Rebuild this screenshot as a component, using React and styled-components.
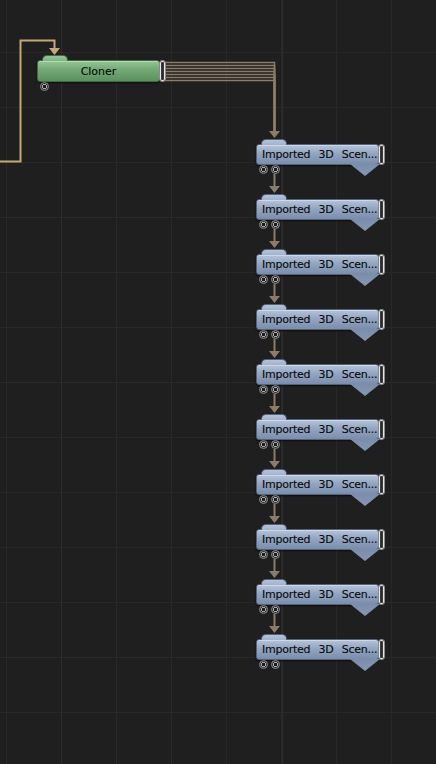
import React from 'react';
import styled, { createGlobalStyle, css } from 'styled-components';

const GlobalStyle = createGlobalStyle`
    html, body {
        margin: 0;
        padding: 0;
        background: #1f1f1f;
    }
    body {
        font-family: "DejaVu Sans", "Liberation Sans", sans-serif;
    }
`;

const Canvas = styled.div`
    position: relative;
    width: 436px;
    height: 764px;
    overflow: hidden;
    background-color: #1f1f1f;
    background-image:
        linear-gradient(to right, #2d2d2d 1px, transparent 1px),
        linear-gradient(to right, #282828 1px, transparent 1px),
        linear-gradient(to bottom, #282828 1px, transparent 1px);
    background-size: 221px 100%, 55px 100%, 100% 55px;
    background-position: 61px 0, 6px 0, 0 52px;
`;

const Wires = styled.svg`
    position: absolute;
    left: 0;
    top: 0;
    pointer-events: none;
`;

// a spot on the free canvas where a node (or group of nodes) sits
const CanvasItem = styled.div`
    position: absolute;
    left: ${p => p.$x}px;
    top: ${p => p.$y}px;
`;

const NodeColumn = styled.div`
    display: flex;
    flex-direction: column;
    gap: 34px;
`;

const palettes = {
    green: {
        top: '#96c596',
        mid: '#72a874',
        bottom: '#5b915e',
        border: '#3f6a43',
        tab: '#7fb480',
    },
    blue: {
        top: '#b6c4da',
        mid: '#93a5c1',
        bottom: '#7a8eac',
        border: '#52627b',
        tab: '#9fb1cc',
    },
};

const NodeBox = styled.div`
    position: relative;
    width: ${p => p.$width}px;
    height: ${p => p.$height}px;
    box-sizing: border-box;
    border: 1px solid ${p => palettes[p.$kind].border};
    border-radius: 3px;
    background: linear-gradient(
        to bottom,
        ${p => palettes[p.$kind].top} 0%,
        ${p => palettes[p.$kind].mid} 45%,
        ${p => palettes[p.$kind].bottom} 100%
    );
    box-shadow: inset 0 1px 0 rgba(255, 255, 255, 0.35), 0 1px 2px rgba(0, 0, 0, 0.6);
    display: flex;
    align-items: center;
    font-size: 11px;
    color: #0a0a0a;
    white-space: nowrap;

    &::before {
        content: '';
        position: absolute;
        top: -6px;
        left: 4px;
        width: 26px;
        height: 6px;
        border-radius: 5px 5px 0 0;
        background: linear-gradient(to bottom, ${p => palettes[p.$kind].top}, ${p => palettes[p.$kind].tab});
        border: 1px solid ${p => palettes[p.$kind].border};
        border-bottom: none;
        box-sizing: border-box;
    }

    ${p => p.$kind === 'blue' && css`
        &::after {
            content: '';
            position: absolute;
            right: -2px;
            bottom: -12px;
            width: 30px;
            height: 12px;
            background: linear-gradient(to bottom, #7a8eac, #8597b4);
            clip-path: polygon(0 0, 100% 0, 50% 100%);
        }
    `}
`;

const Label = styled.span`
    flex: 1;
    text-align: ${p => (p.$center ? 'center' : 'left')};
    padding-left: ${p => (p.$center ? 0 : 5)}px;
    word-spacing: ${p => (p.$center ? 0 : 5)}px;
    letter-spacing: ${p => (p.$center ? 0 : -0.25)}px;
    line-height: 19px;
    -webkit-text-stroke: 0.12px #0a0a0a;
    position: relative;
    z-index: 1;
`;

const Handle = styled.div`
    position: absolute;
    right: -7px;
    top: -1px;
    width: 7px;
    height: ${p => p.$height}px;
    box-sizing: border-box;
    border-radius: 3px;
    background: #2b2b2b;
    border: 1px solid #8a8a8a;
    box-shadow: inset 0 0 0 1px #e6e6e6, inset 0 0 0 2px #3a3a3a;
`;

const Ports = styled.div`
    position: absolute;
    left: 2px;
    top: 100%;
    margin-top: 1px;
    display: flex;
    gap: 3px;
`;

const Port = styled.div`
    width: 9px;
    height: 9px;
    box-sizing: border-box;
    border-radius: 50%;
    background: radial-gradient(circle, #1d1d1d 0 1.6px, #a9a9a9 1.7px 2.6px, #333 2.7px);
    border: 1px solid #8a8a8a;
`;

function Node({ kind, width, height = 21, label, ports }) {
    return (
        <NodeBox $kind={kind} $width={width} $height={height}>
            <Label $center={kind === 'green'}>{label}</Label>
            <Handle $height={height} />
            <Ports>
                {Array.from({ length: ports }).map((_, i) => (
                    <Port key={i} />
                ))}
            </Ports>
        </NodeBox>
    );
}

const importedTops = Array.from({ length: 10 }, (_, i) => 144 + i * 55);
const busLines = [62, 65, 68, 71, 74, 77, 80];
const wireColor = '#8a7c68';

export default function App() {
    return (
        <>
            <GlobalStyle />
            <Canvas>
                <Wires width="436" height="764" viewBox="0 0 436 764">
                    {/* incoming wire into the cloner */}
                    <polyline
                        points="0,161.5 20.5,161.5 20.5,40.5 54.5,40.5 54.5,49"
                        fill="none"
                        stroke="#c6a878"
                        strokeWidth="2"
                    />
                    <polygon points="49,48 60,48 54.5,55" fill="#c6a878" />

                    {/* clone outputs bus */}
                    {busLines.map(yy => (
                        <polyline
                            key={yy}
                            points={`165,${yy + 0.5} 274.5,${yy + 0.5} 274.5,132`}
                            fill="none"
                            stroke={wireColor}
                            strokeWidth="1.5"
                        />
                    ))}
                    <line x1="274.5" y1="80" x2="274.5" y2="132" stroke={wireColor} strokeWidth="2" />
                    <polygon points="269,131 280,131 274.5,138" fill={wireColor} />

                    {/* chain between imported scenes */}
                    {importedTops.slice(0, -1).map(t => (
                        <g key={t}>
                            <line x1="274.5" y1={t + 30} x2="274.5" y2={t + 43} stroke={wireColor} strokeWidth="2" />
                            <polygon
                                points={`269,${t + 42} 280,${t + 42} 274.5,${t + 49}`}
                                fill={wireColor}
                            />
                        </g>
                    ))}
                </Wires>

                <CanvasItem $x={37} $y={60}>
                    <Node kind="green" width={123} height={22} label="Cloner" ports={1} />
                </CanvasItem>

                <CanvasItem $x={256} $y={144}>
                    <NodeColumn>
                        {importedTops.map(t => (
                            <Node key={t} kind="blue" width={123} label="Imported 3D Scen..." ports={2} />
                        ))}
                    </NodeColumn>
                </CanvasItem>
            </Canvas>
        </>
    );
}
